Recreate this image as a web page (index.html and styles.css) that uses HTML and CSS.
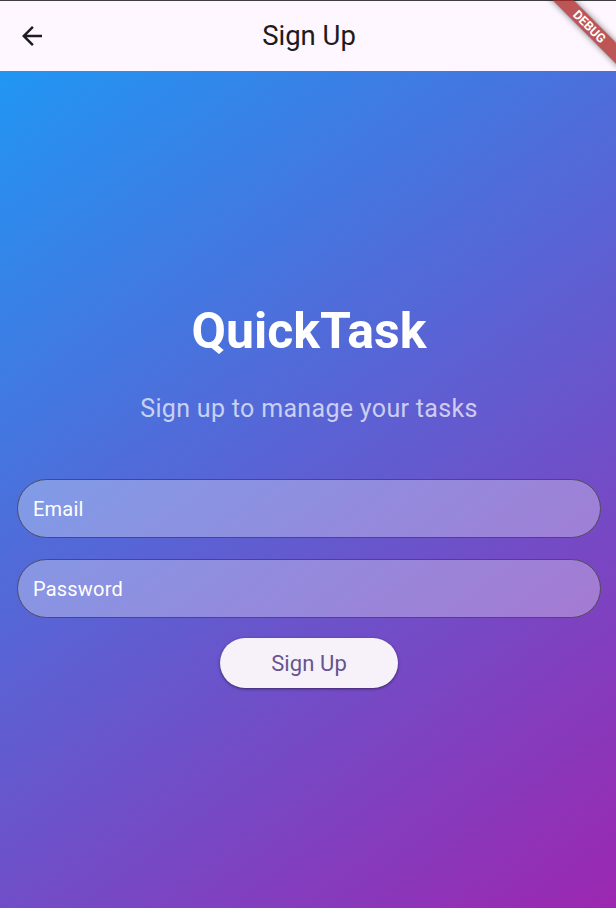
FILE: index.html
```html
<!DOCTYPE html>
<html lang="en">
<head>
<meta charset="utf-8">
<title>Sign Up</title>
<link rel="stylesheet" href="styles.css">
</head>
<body>
<div class="app">
  <header class="appbar">
    <button class="back" aria-label="Back">
      <svg viewBox="0 0 24 24" width="30" height="30"><path d="M20 11H7.83l5.59-5.59L12 4l-8 8 8 8 1.41-1.41L7.83 13H20v-2z" fill="#1d1b20"/></svg>
    </button>
    <h1 class="appbar-title">Sign Up</h1>
  </header>
  <main class="body">
    <h2 class="brand">QuickTask</h2>
    <p class="tagline">Sign up to manage your tasks</p>
    <div class="field"><span class="field-label">Email</span></div>
    <div class="field field-second"><span class="field-label">Password</span></div>
    <button class="submit">Sign Up</button>
  </main>
  <div class="banner-anchor"><div class="banner">DEBUG</div></div>
</div>
</body>
</html>
```
FILE: styles.css
```css
* { box-sizing: border-box; }
html, body { margin: 0; padding: 0; }
body {
  width: 616px;
  height: 908px;
  overflow: hidden;
  font-family: Roboto, "Noto Sans", sans-serif;
}
.app {
  position: relative;
  width: 616px;
  height: 908px;
  overflow: hidden;
  display: flex;
  flex-direction: column;
}
.appbar {
  height: 71px;
  flex: none;
  border-top: 1px solid #3e3e3e;
  background: #fef7ff;
  display: flex;
  align-items: center;
  position: relative;
}
.back {
  border: 0;
  background: none;
  padding: 0;
  margin-left: 17px;
  width: 30px;
  height: 30px;
  display: flex;
}
.appbar-title {
  position: absolute;
  left: 0;
  right: 0;
  margin: 0;
  text-align: center;
  font-weight: 400;
  font-size: 27.5px;
  line-height: 34px;
  color: #1d1b20;
  padding-left: 2px;
  pointer-events: none;
}
.body {
  flex: 1;
  background: linear-gradient(143.65deg, #2196f3 0%, #9c27b0 100%);
  padding: 230px 15px 0 17px;
  display: flex;
  flex-direction: column;
  align-items: stretch;
}
.brand {
  margin: 0;
  text-align: center;
  font-size: 50px;
  line-height: 60px;
  font-weight: 700;
  color: #ffffff;
}
.tagline {
  margin: 32.5px 0 0;
  text-align: center;
  font-size: 25px;
  line-height: 30px;
  letter-spacing: 0.32px;
  color: rgba(255, 255, 255, 0.7);
}
.field {
  margin-top: 55.5px;
  height: 59px;
  border: 1px solid #4f4a5c;
  border-radius: 30px;
  background: rgba(255, 255, 255, 0.3);
  display: flex;
  align-items: center;
  padding-left: 15px;
}
.field-second { margin-top: 21px; }
.field-label {
  font-size: 20px;
  line-height: 24px;
  color: #ffffff;
  letter-spacing: 0.2px;
}
.submit {
  align-self: center;
  margin-top: 20px;
  width: 178px;
  height: 50px;
  border: 0;
  border-radius: 25px;
  background: #f7f2fa;
  color: #65558f;
  font-family: Roboto, "Noto Sans", sans-serif;
  font-size: 22px;
  letter-spacing: 0.1px;
  box-shadow: 0 1px 2px rgba(0, 0, 0, 0.3), 0 1px 3px 1px rgba(0, 0, 0, 0.15);
  padding: 0;
}
.banner-anchor {
  position: absolute;
  top: 0;
  left: 616px;
  width: 0;
  height: 0;
  transform: rotate(45deg);
  transform-origin: 0 0;
}
.banner {
  position: absolute;
  left: -50px;
  top: 30px;
  width: 100px;
  height: 15px;
  background: rgba(170, 40, 40, 0.78);
  box-shadow: 0 0 6px rgba(0, 0, 0, 0.5);
  color: #ffffff;
  font-family: Roboto, "Liberation Sans", sans-serif;
  font-weight: 700;
  font-size: 12.5px;
  line-height: 15px;
  text-align: center;
}
```
